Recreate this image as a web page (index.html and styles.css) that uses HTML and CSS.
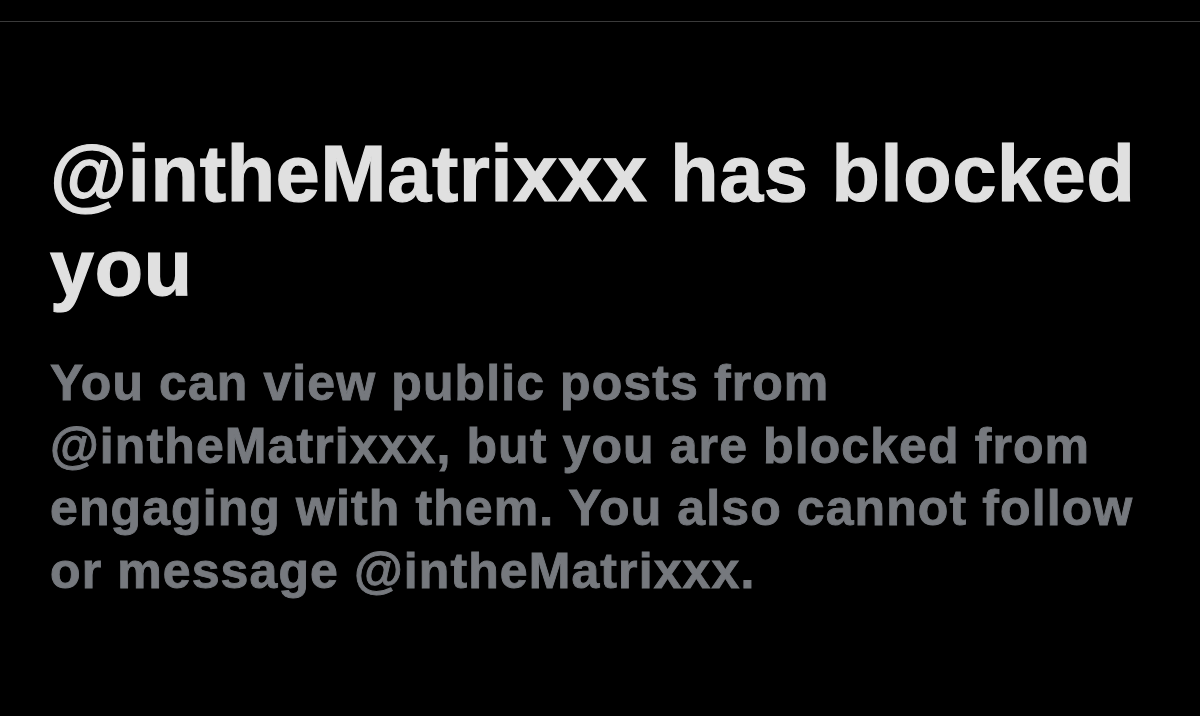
FILE: index.html
```html
<!DOCTYPE html>
<html>
<head>
<meta charset="utf-8">
<link rel="stylesheet" href="styles.css">
</head>
<body>
<div class="page">
  <div class="divider"></div>
  <main class="content">
    <h1 class="title">@intheMatrixxx has blocked you</h1>
    <p class="desc">You can view public posts from @intheMatrixxx, but you are blocked from engaging with them. You also cannot follow or message @intheMatrixxx.</p>
  </main>
</div>
</body>
</html>
```
FILE: styles.css
```css
html, body {
  margin: 0;
  padding: 0;
  background: #000;
}
.page {
  width: 1200px;
  height: 716px;
  background: #000;
  padding-top: 21px;
  box-sizing: border-box;
  font-family: "Liberation Sans", Arial, sans-serif;
  font-weight: 700;
}
.divider {
  height: 1px;
  background: #3a3a3a;
}
.content {
  padding: 0 50px;
}
.title {
  margin: 0;
  padding-top: 105px;
  font-size: 79px;
  line-height: 94px;
  color: #e0e0e0;
  font-weight: 700;
  letter-spacing: 0.8px;
  -webkit-text-stroke: 1.2px #e0e0e0;
  width: 1110px;
}
.desc {
  margin: 37px 0 0 0;
  font-size: 50px;
  line-height: 62.7px;
  color: #76797e;
  font-weight: 700;
  letter-spacing: 1.1px;
  -webkit-text-stroke: 0.9px #76797e;
  width: 1110px;
}
```
